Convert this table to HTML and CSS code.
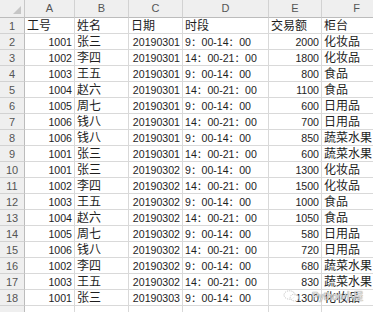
FILE: index.html
```html
<!DOCTYPE html>
<html lang="zh">
<head>
<meta charset="utf-8">
<link rel="stylesheet" href="styles.css">
</head>
<body>
<div class="sheet">
  <div class="grid">
    <div class="corner"><span class="tri"></span></div>
    <div class="colh">A</div><div class="colh">B</div><div class="colh">C</div><div class="colh">D</div><div class="colh">E</div><div class="colh">F</div>

    <div class="rowh">1</div><div class="c zh">工号</div><div class="c zh">姓名</div><div class="c zh">日期</div><div class="c zh">时段</div><div class="c zh">交易额</div><div class="c zh">柜台</div>
    <div class="rowh">2</div><div class="c n">1001</div><div class="c zh">张三</div><div class="c n">20190301</div><div class="c">9：00-14：00</div><div class="c n">2000</div><div class="c zh">化妆品</div>
    <div class="rowh">3</div><div class="c n">1002</div><div class="c zh">李四</div><div class="c n">20190301</div><div class="c">14：00-21：00</div><div class="c n">1800</div><div class="c zh">化妆品</div>
    <div class="rowh">4</div><div class="c n">1003</div><div class="c zh">王五</div><div class="c n">20190301</div><div class="c">9：00-14：00</div><div class="c n">800</div><div class="c zh">食品</div>
    <div class="rowh">5</div><div class="c n">1004</div><div class="c zh">赵六</div><div class="c n">20190301</div><div class="c">14：00-21：00</div><div class="c n">1100</div><div class="c zh">食品</div>
    <div class="rowh">6</div><div class="c n">1005</div><div class="c zh">周七</div><div class="c n">20190301</div><div class="c">9：00-14：00</div><div class="c n">600</div><div class="c zh">日用品</div>
    <div class="rowh">7</div><div class="c n">1006</div><div class="c zh">钱八</div><div class="c n">20190301</div><div class="c">14：00-21：00</div><div class="c n">700</div><div class="c zh">日用品</div>
    <div class="rowh">8</div><div class="c n">1006</div><div class="c zh">钱八</div><div class="c n">20190301</div><div class="c">9：00-14：00</div><div class="c n">850</div><div class="c zh">蔬菜水果</div>
    <div class="rowh">9</div><div class="c n">1001</div><div class="c zh">张三</div><div class="c n">20190301</div><div class="c">14：00-21：00</div><div class="c n">600</div><div class="c zh">蔬菜水果</div>
    <div class="rowh">10</div><div class="c n">1001</div><div class="c zh">张三</div><div class="c n">20190302</div><div class="c">9：00-14：00</div><div class="c n">1300</div><div class="c zh">化妆品</div>
    <div class="rowh">11</div><div class="c n">1002</div><div class="c zh">李四</div><div class="c n">20190302</div><div class="c">14：00-21：00</div><div class="c n">1500</div><div class="c zh">化妆品</div>
    <div class="rowh">12</div><div class="c n">1003</div><div class="c zh">王五</div><div class="c n">20190302</div><div class="c">9：00-14：00</div><div class="c n">1000</div><div class="c zh">食品</div>
    <div class="rowh">13</div><div class="c n">1004</div><div class="c zh">赵六</div><div class="c n">20190302</div><div class="c">14：00-21：00</div><div class="c n">1050</div><div class="c zh">食品</div>
    <div class="rowh">14</div><div class="c n">1005</div><div class="c zh">周七</div><div class="c n">20190302</div><div class="c">9：00-14：00</div><div class="c n">580</div><div class="c zh">日用品</div>
    <div class="rowh">15</div><div class="c n">1006</div><div class="c zh">钱八</div><div class="c n">20190302</div><div class="c">14：00-21：00</div><div class="c n">720</div><div class="c zh">日用品</div>
    <div class="rowh">16</div><div class="c n">1002</div><div class="c zh">李四</div><div class="c n">20190302</div><div class="c">9：00-14：00</div><div class="c n">680</div><div class="c zh">蔬菜水果</div>
    <div class="rowh">17</div><div class="c n">1003</div><div class="c zh">王五</div><div class="c n">20190302</div><div class="c">14：00-21：00</div><div class="c n">830</div><div class="c zh">蔬菜水果</div>
    <div class="rowh">18</div><div class="c n">1001</div><div class="c zh">张三</div><div class="c n">20190303</div><div class="c">9：00-14：00</div><div class="c n">1300</div><div class="c zh">化妆品</div>
    <div class="rowh"></div><div class="c"></div><div class="c"></div><div class="c"></div><div class="c"></div><div class="c"></div><div class="c"></div>
  </div>
  <div class="wm">
    <svg class="wm-icon" width="17" height="12" viewBox="0 0 17 12">
      <ellipse cx="6.5" cy="5" rx="5.5" ry="4.2" fill="rgba(255,255,255,0.6)" stroke="#b8b8b8" stroke-width="0.8" stroke-dasharray="1.2 1"/>
      <ellipse cx="11.5" cy="7.5" rx="4.3" ry="3.4" fill="rgba(255,255,255,0.6)" stroke="#b8b8b8" stroke-width="0.8" stroke-dasharray="1.2 1"/>
    </svg>
    <span class="wm-text">Python小屋</span>
  </div>
</div>
</body>
</html>
```

FILE: styles.css
```css
html, body {
  margin: 0;
  padding: 0;
  background: #ffffff;
}

.sheet {
  position: relative;
  width: 373px;
  height: 312px;
  overflow: hidden;
  font-family: "Liberation Sans", "Noto Sans CJK SC", sans-serif;
  font-size: 10.6px;
  color: #1e1e1e;
}

.grid {
  display: grid;
  grid-template-columns: 25px 50px 54px 54px 86px 53px 70px;
  grid-template-rows: 18px repeat(19, 16px);
  width: 392px;
}

.grid > div {
  box-sizing: border-box;
  border-right: 1px solid #d9d9d9;
  border-bottom: 1px solid #d9d9d9;
  white-space: nowrap;
  overflow: hidden;
}

.corner {
  position: relative;
  background: #efefef;
  border-bottom-color: #bcbcbc !important;
  border-right-color: #c8c8c8 !important;
}

.tri {
  position: absolute;
  right: 3px;
  bottom: 3px;
  width: 0;
  height: 0;
  border-left: 8px solid transparent;
  border-bottom: 8px solid #c6c6c6;
}

.colh {
  background: #efefef;
  color: #555555;
  font-size: 11px;
  text-align: center;
  line-height: 17px;
  border-bottom-color: #bcbcbc !important;
  border-right-color: #d2d2d2 !important;
}

.rowh {
  background: #efefef;
  color: #555555;
  font-size: 11px;
  text-align: center;
  line-height: 16px;
  border-right-color: #bcbcbc !important;
  border-bottom-color: #d2d2d2 !important;
}

.c {
  line-height: 16px;
  padding: 0 2px;
}

.n {
  text-align: right;
}

.zh {
  font-size: 12px;
}

.wm {
  position: absolute;
  left: 283px;
  top: 288px;
  display: flex;
  align-items: center;
  gap: 2px;
}

.wm-icon {
  display: block;
}

.wm-text {
  font-family: "Liberation Sans", "Noto Sans CJK SC", sans-serif;
  font-size: 10px;
  color: rgba(255, 255, 255, 0.75);
  text-shadow: 0 0 1px #8a8a8a, 0 0 1px #8a8a8a;
  margin-left: 10px;
}
```
